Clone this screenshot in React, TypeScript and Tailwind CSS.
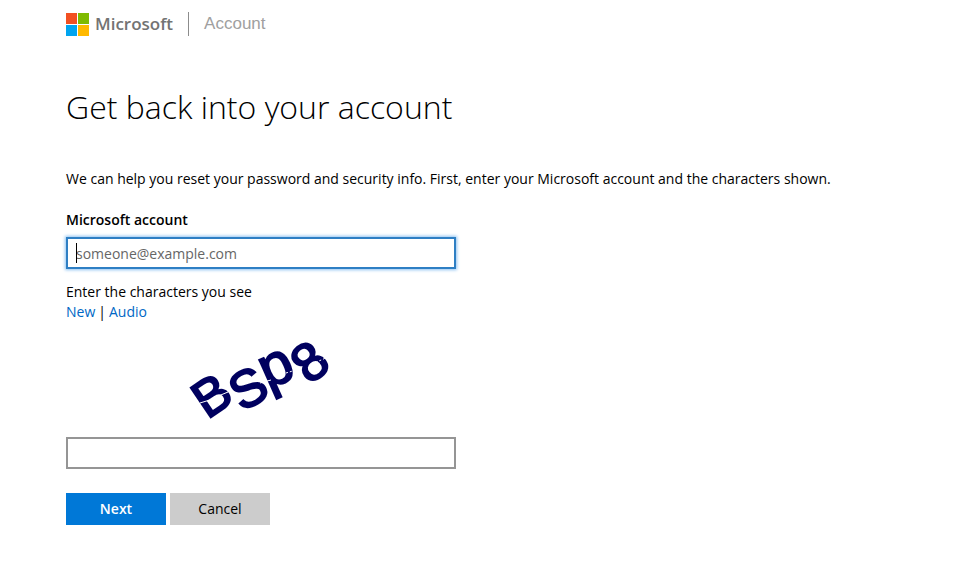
import React, { useState } from 'react';

interface CaptchaGlyph {
  char: string;
  x: number;
  y: number;
  baseline: number;
  angle: number;
  size: number;
}

// Each glyph is turned around its own centre
const glyphs: CaptchaGlyph[] = [
  { char: 'B', x: 36, y: 66, baseline: 17, angle: -34, size: 52 },
  { char: 'S', x: 72, y: 58, baseline: 18, angle: -30, size: 52 },
  { char: 'p', x: 102, y: 42, baseline: 12, angle: -24, size: 58 },
  { char: '8', x: 134, y: 32, baseline: 18, angle: -40, size: 54 },
];

const Logo: React.FC = () => (
  <svg width="23" height="23" viewBox="0 0 23 23" aria-hidden="true">
    <rect width="11" height="11" fill="#f25022" />
    <rect x="12" width="11" height="11" fill="#7fba00" />
    <rect y="12" width="11" height="11" fill="#00a4ef" />
    <rect x="12" y="12" width="11" height="11" fill="#ffb900" />
  </svg>
);

const Captcha: React.FC = () => (
  <svg
    className="ml-[110px] mt-2 block overflow-visible font-['Liberation_Sans',sans-serif]"
    width="170"
    height="100"
    viewBox="0 0 170 100"
    role="img"
    aria-label="Characters to enter"
  >
    {glyphs.map((glyph) => (
      <text
        key={glyph.char}
        transform={`translate(${glyph.x} ${glyph.y}) rotate(${glyph.angle})`}
        y={glyph.baseline}
        textAnchor="middle"
        fontSize={glyph.size}
        fill="#00005f"
        stroke="#00005f"
        strokeWidth="2"
      >
        {glyph.char}
      </text>
    ))}
    <path
      d="M24 73l16-5M40 67l12-5M84 53l11-3"
      fill="none"
      stroke="#fff"
      strokeWidth="1"
    />
    <path
      d="M110 43l10-3M136 34l16-7"
      fill="none"
      stroke="#fff"
      strokeWidth="1"
      strokeDasharray="2 2"
    />
  </svg>
);

const App: React.FC = () => {
  const [account, setAccount] = useState<string>('');
  const [characters, setCharacters] = useState<string>('');

  return (
    <div className="min-h-screen bg-white px-[66px] pb-9 font-['Open_Sans','Noto_Sans',sans-serif] text-sm leading-5 text-black">
      <header className="flex h-12 items-center">
        <Logo />
        <span className="ml-[6px] text-[17px] font-semibold text-[#737373]">
          Microsoft
        </span>
        <span className="mx-[15px] h-6 w-px bg-[#8c8c8c]" />
        <span className="font-['Liberation_Sans',sans-serif] text-[17px] text-[#a0a0a0]">
          Account
        </span>
      </header>

      <main>
        <h1 className="mt-9 text-[32px] font-light leading-[46px]">
          Get back into your account
        </h1>
        <p className="mt-[39px]">
          We can help you reset your password and security info. First, enter
          your Microsoft account and the characters shown.
        </p>

        <form
          className="mt-[21px] max-w-[390px]"
          onSubmit={(event) => event.preventDefault()}
        >
          <label htmlFor="account" className="block font-semibold">
            Microsoft account
          </label>
          <div className="relative mt-[7px]">
            <input
              id="account"
              type="text"
              autoFocus
              className="block h-8 w-full border-2 border-[#2e7fc4] px-2 shadow-[0_0_3px_1px_#8fc3f2] outline-none placeholder:text-[#666666] placeholder-shown:caret-transparent"
              placeholder="someone@example.com"
              value={account}
              onChange={(event) => setAccount(event.target.value)}
            />
            {account === '' && (
              <span className="pointer-events-none absolute left-[10px] top-[6px] h-5 w-px bg-black" />
            )}
          </div>

          <label htmlFor="characters" className="mt-[13px] block">
            Enter the characters you see
          </label>
          <div className="flex gap-[3px]">
            <a href="#new" className="text-[#0067c5]">
              New
            </a>
            <span>|</span>
            <a href="#audio" className="text-[#0067c5]">
              Audio
            </a>
          </div>
          <Captcha />
          <input
            id="characters"
            type="text"
            className="mt-[7px] block h-8 w-full border-2 border-[#959595] px-2 outline-none"
            value={characters}
            onChange={(event) => setCharacters(event.target.value)}
          />

          <div className="mt-6 flex gap-1">
            <button
              type="submit"
              className="h-8 w-[100px] bg-[#0078d7] font-semibold text-white"
            >
              Next
            </button>
            <button type="button" className="h-8 w-[100px] bg-[#cccccc]">
              Cancel
            </button>
          </div>
        </form>
      </main>
    </div>
  );
};

export default App;
